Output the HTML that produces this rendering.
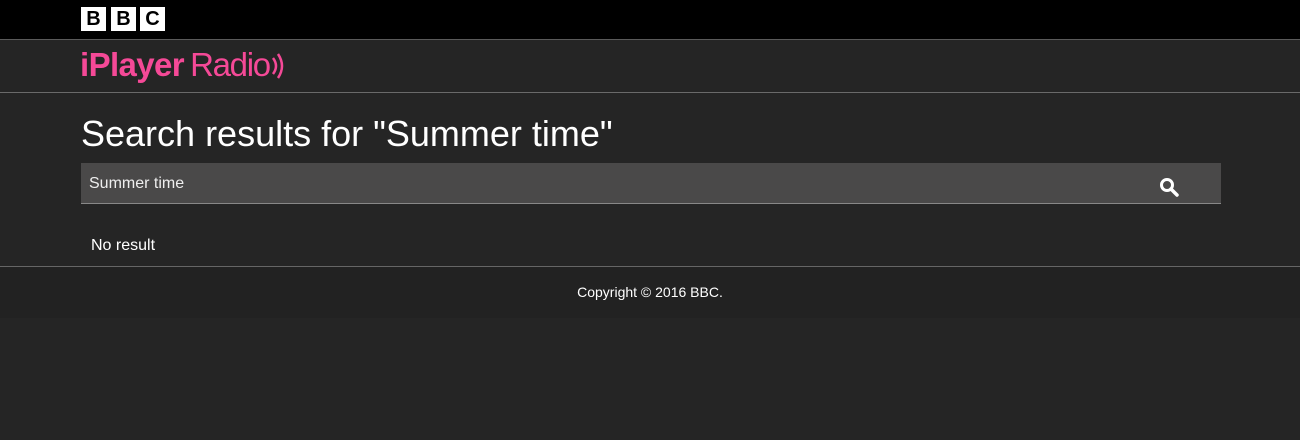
<!DOCTYPE html>
<html><head><style>
body{margin:0;background:#252525;font-family:"Liberation Sans",sans-serif;width:1300px;height:440px;overflow:hidden}
.top{height:39px;background:#000;border-bottom:1px solid #5a5a5a;position:relative}
.b{position:absolute;top:7px;width:25px;height:24px;background:#fff;color:#000;font-weight:bold;font-size:20px;line-height:25px;text-align:center}
.nav{height:52px;border-bottom:1px solid #6a6a6a;position:relative}
.logo{position:absolute;left:80px;top:4px;color:#f54997;font-size:33px;line-height:42px;white-space:nowrap}
.logo b{letter-spacing:-0.6px}
.logo i{font-style:normal;letter-spacing:-1.3px;margin-left:6px}
h1{position:absolute;left:81px;top:113px;margin:0;font-weight:normal;color:#fff;font-size:36px}
.sb{position:absolute;left:81px;top:163px;width:1140px;height:40px;background:#4a4949;border-bottom:1px solid #888}
.sb span{position:absolute;left:8px;top:12px;color:#eee;font-size:16px}
.nr{position:absolute;left:91px;top:237px;color:#fff;font-size:16px}
.foot{position:absolute;left:0;top:266px;width:1300px;height:51px;background:#222;border-top:1px solid #666;text-align:center;color:#fff;font-size:14px;line-height:50px}
</style></head><body>
<div class="top"><div class="b" style="left:81px">B</div><div class="b" style="left:111px">B</div><div class="b" style="left:140px">C</div></div>
<div class="nav"><div class="logo"><b>iPlayer</b><i>Radio</i></div>
<svg style="position:absolute;left:270px;top:12px" width="18" height="28" viewBox="0 0 18 28"><path d="M3 6 Q9 14 3 22" fill="none" stroke="#f54997" stroke-width="2.5"/><path d="M8 2 Q16 14 8 26" fill="none" stroke="#f54997" stroke-width="2.5"/></svg></div>
<h1>Search results for "Summer time"</h1>
<div class="sb"><span>Summer time</span>
<svg style="position:absolute;left:1078px;top:14px" width="22" height="22" viewBox="0 0 22 22"><circle cx="8" cy="8" r="5.5" fill="none" stroke="#fff" stroke-width="3"/><line x1="12" y1="12" x2="18" y2="18" stroke="#fff" stroke-width="3.5" stroke-linecap="round"/></svg></div>
<div class="nr">No result</div>
<div class="foot">Copyright © 2016 BBC.</div>
</body></html>
